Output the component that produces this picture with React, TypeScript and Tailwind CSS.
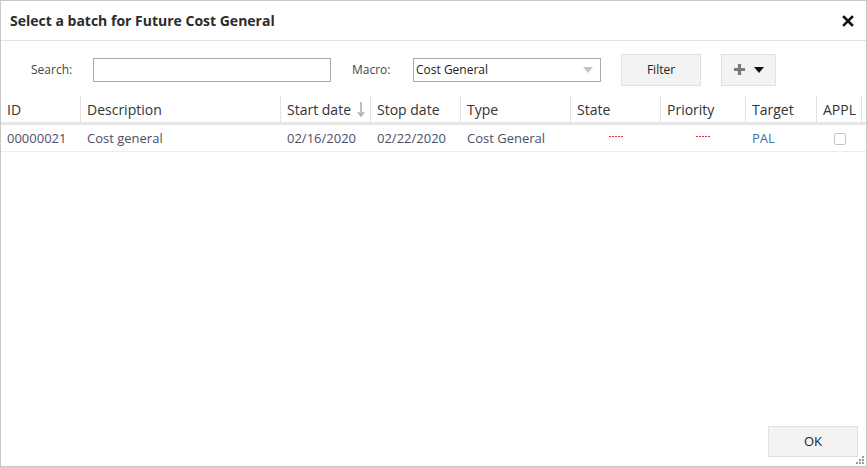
import { useState } from "react";

const cols = [
  { label: "ID", w: "w-[80px]" },
  { label: "Description", w: "w-[200px]" },
  { label: "Start date", w: "w-[90px]", sort: true },
  { label: "Stop date", w: "w-[90px]" },
  { label: "Type", w: "w-[110px]" },
  { label: "State", w: "w-[90px]" },
  { label: "Priority", w: "w-[85px]" },
  { label: "Target", w: "w-[71px]" },
  { label: "APPL", w: "w-[45px]" },
];

function Dashes() {
  return (
    <svg width="15" height="1" viewBox="0 0 15 1" shapeRendering="crispEdges">
      {[0, 3, 6, 9, 12].map((x) => (
        <rect key={x} x={x} y="0" width="2" height="1" fill="#d9363e" />
      ))}
    </svg>
  );
}

export default function App() {
  const [search, setSearch] = useState("");
  const [checked, setChecked] = useState(false);

  return (
    <div className="relative flex h-[467px] w-[867px] flex-col border border-[#c8c8c8] bg-white font-['Open_Sans',sans-serif] text-[#333]">
      <div className="flex h-[40px] items-center justify-between border-b border-[#e2e2e2] pl-[9px] pr-[10px]">
        <h1 className="text-[14px] font-bold text-[#2b2b2b]">Select a batch for Future Cost General</h1>
        <button className="flex h-4 w-4 items-center justify-center">
          <svg width="12" height="12" viewBox="0 0 12 12">
            <path d="M2 2 L10 10 M10 2 L2 10" stroke="#111" strokeWidth="2.6" strokeLinecap="square" />
          </svg>
        </button>
      </div>

      <div className="flex h-[55px] items-center pt-[2px] text-[12px]">
        <label className="ml-[30px] w-[62px] text-[#444]">Search:</label>
        <input
          value={search}
          onChange={(e) => setSearch(e.target.value)}
          className="h-[24px] w-[238px] border border-[#a9a9a9] px-1 text-[12px] outline-none"
        />
        <label className="ml-[21px] w-[61px] text-[#444]">Macro:</label>
        <div className="flex h-[24px] w-[188px] items-center justify-between border border-[#a9a9a9] pl-[2px] pr-[7px] text-[12px] text-[#222]">
          <span>Cost General</span>
          <svg width="10" height="6" viewBox="0 0 10 6">
            <path d="M0 0 H10 L5 6 Z" fill="#c4c4c4" />
          </svg>
        </div>
        <button className="ml-[20px] h-[32px] w-[80px] border border-[#e0e0e0] bg-[#f3f3f3] text-[12px] text-[#222]">
          Filter
        </button>
        <button className="ml-[20px] flex h-[32px] w-[55px] items-center justify-center gap-[8px] border border-[#e0e0e0] bg-[#f3f3f3]">
          <svg width="13" height="13" viewBox="0 0 13 13">
            <path d="M6.5 1 V12 M1 6.5 H12" stroke="#7a7a7a" strokeWidth="3.2" />
          </svg>
          <svg width="10" height="6" viewBox="0 0 10 6">
            <path d="M0 0 H10 L5 6 Z" fill="#111" />
          </svg>
        </button>
      </div>

      <div className="flex h-[29px] border-b-[3px] border-[#e6e6e6] text-[14px] text-[#333]">
        {cols.map((c) => (
          <div
            key={c.label}
            className={`${c.w} flex items-center border-r border-[#e2e2e2] pl-[6px]`}
          >
            <span>{c.label}</span>
            {c.sort ? (
              <svg className="ml-[6px]" width="8" height="15" viewBox="0 0 8 15">
                <path d="M4 0 V13 M1 10 L4 14 L7 10" stroke="#b0b0b0" strokeWidth="1.6" fill="none" />
              </svg>
            ) : null}
          </div>
        ))}
      </div>

      <div className="flex h-[27px] items-center border-b border-[#ececec] pt-[2px] text-[13px] text-[#4b4f66]">
        <div className="w-[80px] pl-[6px]">00000021</div>
        <div className="w-[200px] pl-[6px]">Cost general</div>
        <div className="w-[90px] pl-[6px]">02/16/2020</div>
        <div className="w-[90px] pl-[6px]">02/22/2020</div>
        <div className="w-[110px] pl-[6px]">Cost General</div>
        <div className="flex w-[90px] justify-center pb-[5px]">
          <Dashes />
        </div>
        <div className="flex w-[85px] justify-center pb-[5px]">
          <Dashes />
        </div>
        <div className="w-[71px] pl-[6px] text-[#3f6fa6]">PAL</div>
        <div className="flex w-[45px] justify-center">
          <button
            onClick={() => setChecked(!checked)}
            className="h-[12px] w-[12px] rounded-[2px] border border-[#c6c6c6] bg-white"
          />
        </div>
      </div>

      <div className="flex-1" />

      <div className="flex justify-end pb-[9px] pr-[8px]">
        <button className="h-[31px] w-[90px] border border-[#e0e0e0] bg-[#f3f3f3] text-[13px] text-[#222]">OK</button>
      </div>

      <svg className="absolute bottom-[1px] right-[1px]" width="10" height="10" viewBox="0 0 10 10">
        <rect x="7" y="1" width="2" height="2" fill="#9a9a9a" />
        <rect x="4" y="4" width="2" height="2" fill="#9a9a9a" />
        <rect x="7" y="4" width="2" height="2" fill="#9a9a9a" />
        <rect x="1" y="7" width="2" height="2" fill="#9a9a9a" />
        <rect x="4" y="7" width="2" height="2" fill="#9a9a9a" />
        <rect x="7" y="7" width="2" height="2" fill="#9a9a9a" />
      </svg>
    </div>
  );
}
